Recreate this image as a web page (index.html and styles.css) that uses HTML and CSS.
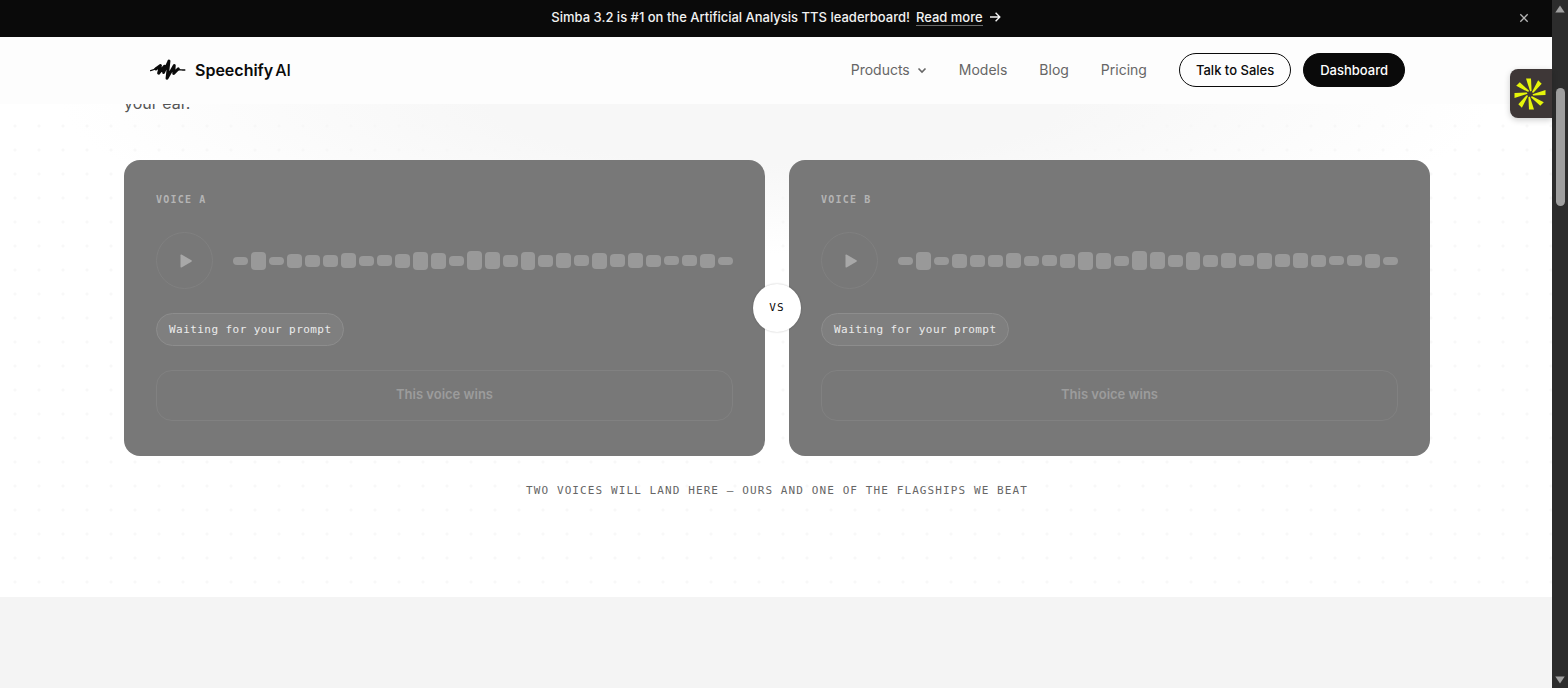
FILE: index.html
```
<!DOCTYPE html>
<html lang="en">
<head>
  <meta charset="UTF-8">
  <meta name="viewport" content="width=device-width, initial-scale=1.0">
  <title>Speechify AI</title>
  <link rel="stylesheet" href="styles.css">
</head>
<body>
  <div class="page">
    <div class="banner">
      <p class="banner-text">Simba 3.2 is #1 on the Artificial Analysis TTS leaderboard!</p>
      <a class="banner-link" href="#"><span class="banner-link-text">Read more</span>
        <svg width="12" height="12" viewBox="0 0 12 12" fill="none" stroke="currentColor" stroke-width="1.4" aria-hidden="true"><path d="M1 6h10M6.6 1.8 10.8 6l-4.2 4.2"/></svg>
      </a>
      <button class="banner-close" aria-label="Close">
        <svg width="10" height="10" viewBox="0 0 10 10" stroke="currentColor" stroke-width="1.3" aria-hidden="true"><path d="M1.3 1.3l7.4 7.4M8.7 1.3 1.3 8.7"/></svg>
      </button>
    </div>

    <header class="header">
      <a class="logo" href="#">
        <svg width="36" height="24" viewBox="0 0 36 24" fill="none" stroke="#0a0a0a" stroke-linecap="round" stroke-linejoin="round" aria-hidden="true">
          <path d="M.6 12.600C3 12.300 5 11.300 7 9.500" stroke-width="1.300"/>
          <path d="M5.800 11 10.500 7.500 8.600 15.200 14.500 8.200 13.600 14.500 19 3 17 20.300 24.300 7.500 23.700 15.500 28.300 10.800" stroke-width="2.900"/>
          <path d="M27.500 11.800C30 11.400 32 12.200 34.800 12" stroke-width="1.400"/>
        </svg>
        <span class="logo-text">Speechify<span class="logo-ai">AI</span></span>
      </a>
      <nav class="nav">
        <a class="nav-link" href="#">Products
          <svg width="10" height="10" viewBox="0 0 10 10" fill="none" stroke="currentColor" stroke-width="1.600" aria-hidden="true"><path d="M1.500 3.500 5 7l3.500-3.500"/></svg>
        </a>
        <a class="nav-link" href="#">Models</a>
        <a class="nav-link" href="#">Blog</a>
        <a class="nav-link" href="#">Pricing</a>
      </nav>
      <div class="actions">
        <a class="btn btn-outline" href="#">Talk to Sales</a>
        <a class="btn btn-dark" href="#">Dashboard</a>
      </div>
    </header>

    <main>
      <section class="arena">
        <p class="intro">your ear.</p>
        <div class="cards">
          <article class="card">
            <h2 class="card-label">Voice A</h2>
            <div class="player">
              <button class="play" aria-label="Play voice A" disabled>
                <svg width="12" height="14" viewBox="0 0 12 14" fill="currentColor" aria-hidden="true"><path d="M.5 1.200Q.5.100 1.500.600L11.400 6.300q.9.700 0 1.400L1.500 13.400Q.5 13.900.5 12.800z"/></svg>
              </button>
              <div class="wave"></div>
            </div>
            <span class="status">Waiting for your prompt</span>
            <button class="vote" disabled>This voice wins</button>
          </article>
          <article class="card">
            <h2 class="card-label">Voice B</h2>
            <div class="player">
              <button class="play" aria-label="Play voice B" disabled>
                <svg width="12" height="14" viewBox="0 0 12 14" fill="currentColor" aria-hidden="true"><path d="M.5 1.200Q.5.100 1.500.600L11.400 6.300q.9.700 0 1.400L1.500 13.400Q.5 13.900.5 12.800z"/></svg>
              </button>
              <div class="wave"></div>
            </div>
            <span class="status">Waiting for your prompt</span>
            <button class="vote" disabled>This voice wins</button>
          </article>
          <span class="versus">VS</span>
        </div>
        <p class="caption">Two voices will land here — ours and one of the flagships we beat</p>
      </section>
      <section class="next"></section>
    </main>

    <button class="widget" aria-label="Open assistant">
      <svg width="32" height="32" viewBox="-16 -16 32 32" fill="#e6f50a" aria-hidden="true">
        <defs><path id="ray" d="M-4-15.500 1-15.500 1.600-3.200.2-2.500z"/></defs>
        <use href="#ray"/>
        <use href="#ray" transform="rotate(45)"/>
        <use href="#ray" transform="rotate(90)"/>
        <use href="#ray" transform="rotate(135)"/>
        <use href="#ray" transform="rotate(180)"/>
        <use href="#ray" transform="rotate(225)"/>
        <use href="#ray" transform="rotate(270)"/>
        <use href="#ray" transform="rotate(315)"/>
      </svg>
    </button>
  </div>

  <div class="scrollbar" aria-hidden="true">
    <svg width="10" height="8" viewBox="0 0 10 8" fill="#a0a0a0"><path d="M5 .5 9.700 7.500H.3z"/></svg>
    <div class="track"><div class="thumb"></div></div>
    <svg width="10" height="8" viewBox="0 0 10 8" fill="#a0a0a0"><path d="M5 7.500 9.700.5H.3z"/></svg>
  </div>

  <script>
    // Idle waveform, same bars in both players
    const bars = [8, 18, 8, 14, 12, 12, 15, 10, 11, 14, 18, 16, 10, 19, 17, 12, 18, 12, 15, 11, 16, 13, 15, 12, 9, 11, 14, 8];

    document.querySelectorAll('.wave').forEach((wave) => {
      bars.forEach((height) => {
        const bar = document.createElement('span');
        bar.className = 'bar';
        bar.style.height = height + 'px';
        wave.appendChild(bar);
      });
    });
  </script>
</body>
</html>
```
FILE: styles.css
```
* {
  box-sizing: border-box;
}
body {
  margin: 0;
  display: flex;
  height: 100vh;
  overflow: hidden;
  font-family: Inter, "Liberation Sans", sans-serif;
  font-size: 13px;
  line-height: 20px;
  color: #0a0a0a;
  background: #fff;
}
p, h2 {
  margin: 0;
}
a {
  color: inherit;
  text-decoration: none;
}
button {
  font: inherit;
  border: none;
  padding: 0;
}
.page {
  position: relative;
  flex: 1;
  min-width: 0;
  display: flex;
  flex-direction: column;
}

/* banner */
.banner {
  position: relative;
  display: flex;
  justify-content: center;
  align-items: center;
  gap: 6px;
  height: 37px;
  padding-bottom: 3px;
  background: #0a0a0a;
  color: #f2f2f2;
  font-weight: 500;
}
.banner-link {
  display: flex;
  align-items: center;
  gap: 6px;
}
.banner-link-text {
  line-height: 16px;
  border-bottom: 1px solid #6b6b6b;
}
.banner-close {
  position: absolute;
  right: 23px;
  top: 13px;
  display: flex;
  background: none;
  color: #b5b5b5;
}

/* header */
.header {
  position: relative;
  z-index: 1;
  display: flex;
  align-items: center;
  height: 67px;
  padding: 0 147px 2px 150px;
  background: #fdfdfd;
}
.logo {
  display: flex;
  align-items: center;
  gap: 9px;
  margin-right: auto;
}
.logo-text {
  font-size: 16px;
  font-weight: 600;
}
.logo-ai {
  margin-left: 2px;
  font-weight: 500;
}
.nav {
  display: flex;
  gap: 32px;
  font-size: 14px;
  color: #666;
}
.nav-link {
  display: flex;
  align-items: center;
  gap: 7px;
}
.actions {
  display: flex;
  align-items: center;
  gap: 12px;
  margin-left: 32px;
}
.btn {
  padding: 6px 16px;
  border: 1px solid #0a0a0a;
  border-radius: 17px;
  font-weight: 500;
}
.btn-dark {
  background: #0a0a0a;
  color: #fff;
}

/* voice comparison */
.arena {
  padding: 0 122px 96px 124px;
  background:
    radial-gradient(ellipse 46% 150px at 50% 0, #f7f7f7 40%, rgba(247, 247, 247, 0)),
    radial-gradient(circle at 12px 12px, #f8f8f8 1px, transparent 2px) 3px 10px / 24px 24px,
    #fff;
}
.intro {
  margin-top: -14px;
  padding-bottom: 44px;
  font-size: 16px;
  line-height: 26px;
  color: #555;
}
.cards {
  position: relative;
  display: grid;
  grid-template-columns: 1fr 1fr;
  gap: 24px;
}
.card {
  display: flex;
  flex-direction: column;
  align-items: flex-start;
  padding: 32px 32px 35px;
  border-radius: 16px;
  background: #787878;
}
.card-label {
  margin-bottom: 25px;
  font-family: "DejaVu Sans Mono", monospace;
  font-size: 10px;
  line-height: 15px;
  font-weight: 700;
  letter-spacing: 0.12em;
  text-transform: uppercase;
  color: #b4b4b4;
}
.player {
  display: flex;
  align-items: center;
  gap: 20px;
  width: 100%;
  margin-bottom: 24px;
}
.play {
  display: flex;
  align-items: center;
  justify-content: center;
  width: 57px;
  height: 57px;
  padding-left: 2px;
  border: 1px solid #808080;
  border-radius: 50%;
  background: none;
  color: #a8a8a8;
}
.wave {
  flex: 1;
  display: flex;
  align-items: center;
  gap: 3px;
}
.bar {
  flex: 1;
  border-radius: 4px;
  background: #999;
}
.status {
  margin-bottom: 24px;
  padding: 7px 12px 6px;
  border: 1px solid #8d8d8d;
  border-radius: 17px;
  background: #7f7f7f;
  font-family: "DejaVu Sans Mono", monospace;
  font-size: 11px;
  line-height: 18px;
  letter-spacing: 0.04em;
  color: #ececec;
}
.vote {
  width: 100%;
  height: 51px;
  padding-bottom: 3px;
  border: 1px solid #818181;
  border-radius: 16px;
  background: none;
  font-weight: 600;
  color: #9c9c9c;
}
.versus {
  position: absolute;
  top: 50%;
  left: 50%;
  transform: translate(-50%, -50%);
  width: 48px;
  height: 48px;
  border-radius: 50%;
  background: #fff;
  box-shadow: 0 0 2px rgba(0, 0, 0, 0.25);
  font-family: "DejaVu Sans Mono", monospace;
  font-size: 11px;
  line-height: 48px;
  letter-spacing: 0.1em;
  text-align: center;
}
.caption {
  margin-top: 25px;
  font-family: "DejaVu Sans Mono", monospace;
  font-size: 11px;
  letter-spacing: 0.1em;
  text-align: center;
  text-transform: uppercase;
  color: #666;
}
main {
  flex: 1;
  display: flex;
  flex-direction: column;
}
.next {
  flex: 1;
  background: #f4f4f4;
}

/* floating assistant button */
.widget {
  position: absolute;
  z-index: 2;
  top: 69px;
  right: 0;
  display: flex;
  align-items: center;
  padding-left: 4px;
  width: 42px;
  height: 49px;
  border-radius: 8px 0 0 8px;
  background: #3e3737;
  box-shadow: 0 2px 6px rgba(0, 0, 0, 0.2);
}

.scrollbar {
  display: flex;
  flex-direction: column;
  align-items: center;
  width: 16px;
  padding: 5px 0 4px;
  background: #2c2c2c;
}
.track {
  flex: 1;
  padding-top: 75px;
}
.thumb {
  width: 9px;
  height: 118px;
  border-radius: 5px;
  background: #9f9f9f;
}
```
